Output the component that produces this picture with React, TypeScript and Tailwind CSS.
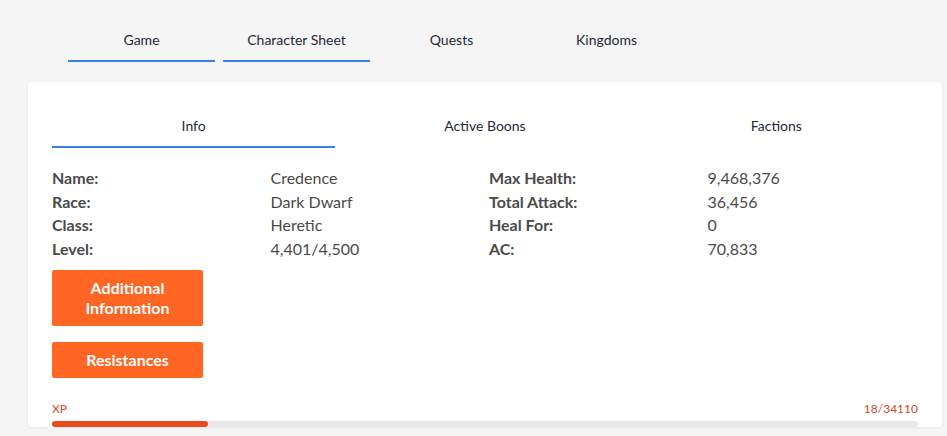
import React from "react";

const topTabs = [
  { label: "Game", active: true },
  { label: "Character Sheet", active: true },
  { label: "Quests", active: false },
  { label: "Kingdoms", active: false },
];

const innerTabs = [
  { label: "Info", active: true },
  { label: "Active Boons", active: false },
  { label: "Factions", active: false },
];

const rows = [
  ["Name:", "Credence", "Max Health:", "9,468,376"],
  ["Race:", "Dark Dwarf", "Total Attack:", "36,456"],
  ["Class:", "Heretic", "Heal For:", "0"],
  ["Level:", "4,401/4,500", "AC:", "70,833"],
];

export default function App() {
  const xp = 18;
  const xpMax = 34110;
  const pct = 18;
  return (
    <div className="min-h-screen bg-[#f5f5f5] font-['Lato',sans-serif] text-[#1f2937] overflow-hidden">
      <div className="flex gap-2 pl-[68px] pt-[30px]">
        {topTabs.map((t) => (
          <div
            key={t.label}
            className={`w-[147px] text-center text-[14px] leading-5 pb-[10px] border-b-2 ${
              t.active ? "border-[#3b7fe6]" : "border-transparent"
            }`}
          >
            {t.label}
          </div>
        ))}
      </div>
      <div className="ml-[28px] mt-5 w-[914px] h-[345px] bg-white rounded-[3px] shadow-[0_1px_3px_rgba(0,0,0,0.06)] px-6 overflow-hidden">
        <div className="flex gap-2 pt-[34px]">
          {innerTabs.map((t) => (
            <div
              key={t.label}
              className={`flex-1 text-center text-[14px] leading-5 pb-[10px] border-b-2 ${
                t.active ? "border-[#3b7fe6]" : "border-transparent"
              }`}
            >
              {t.label}
            </div>
          ))}
        </div>
        <div className="mt-[18px] grid grid-cols-4 gap-x-2 text-[16px] leading-[23.7px] text-[#4a4a4a]">
          {rows.map((r) => (
            <React.Fragment key={r[0]}>
              <div className="font-bold">{r[0]}</div>
              <div>{r[1]}</div>
              <div className="font-bold">{r[2]}</div>
              <div>{r[3]}</div>
            </React.Fragment>
          ))}
        </div>
        <button className="mt-[9px] block w-[151px] h-[56px] rounded-[2px] bg-[#ff6523] text-white font-bold text-[16px] leading-5">
          Additional
          <br />
          Information
        </button>
        <button className="mt-4 block w-[151px] h-[36px] rounded-[2px] bg-[#ff6523] text-white font-bold text-[16px] leading-5">
          Resistances
        </button>
        <div className="mt-[23px] flex justify-between text-[12px] leading-4 text-[#cf4a2a]">
          <span>XP</span>
          <span>
            {xp}/{xpMax}
          </span>
        </div>
        <div className="mt-[4px] h-[6px] w-full rounded-full bg-[#e8e8e8]">
          <div className="h-full rounded-full bg-[#ea4c1d]" style={{ width: `${pct}%` }} />
        </div>
      </div>
    </div>
  );
}
